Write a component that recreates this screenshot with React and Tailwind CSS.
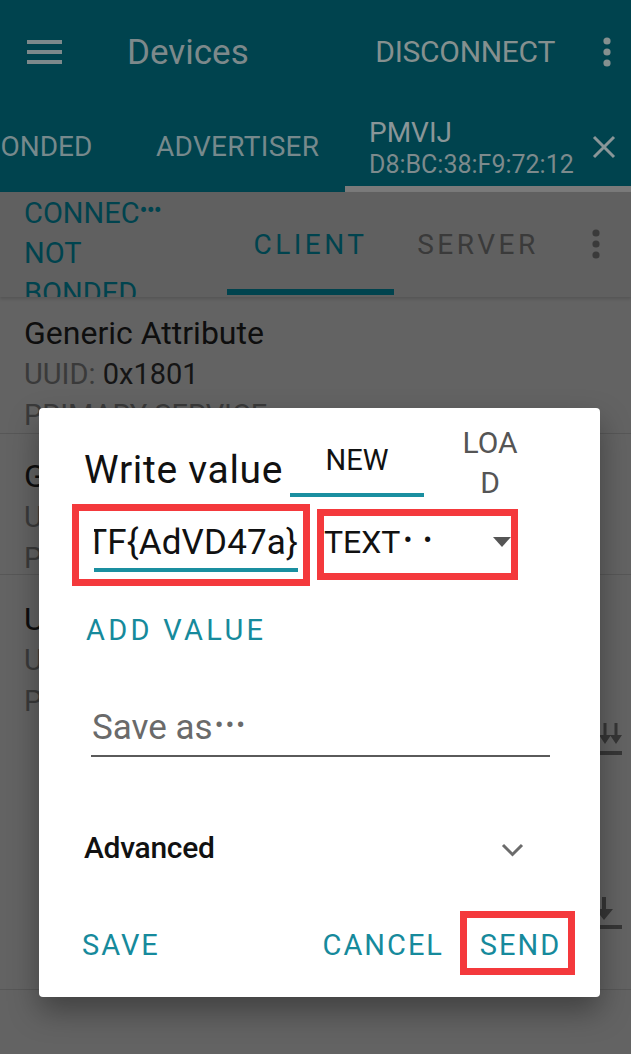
import React from "react";

function Kebab({ className, color }) {
  return (
    <svg className={className} width="8" height="30" viewBox="0 0 8 30">
      <circle cx="4" cy="4" r="3.6" fill={color} />
      <circle cx="4" cy="15" r="3.6" fill={color} />
      <circle cx="4" cy="26" r="3.6" fill={color} />
    </svg>
  );
}

export default function App() {
  return (
    <div className="relative w-[631px] h-[1054px] overflow-hidden bg-[#636363] font-[Roboto,sans-serif]">
      {/* Top app bar */}
      <div className="h-[192px] bg-[#00434e] flex flex-col">
        <div className="h-[104px] flex items-center">
          <svg className="ml-[27px] shrink-0" width="35" height="24" viewBox="0 0 35 24">
            <rect x="0" y="0" width="35" height="4" fill="#7d898b" />
            <rect x="0" y="10" width="35" height="4" fill="#7d898b" />
            <rect x="0" y="20" width="35" height="4" fill="#7d898b" />
          </svg>
          <span className="ml-[65px] text-[35px] leading-none text-[#7d898b]">Devices</span>
          <span className="ml-auto text-[30px] leading-none tracking-[-0.3px] text-[#85908f]">DISCONNECT</span>
          <Kebab className="ml-[48px] mr-[20px] shrink-0" color="#85908f" />
        </div>
        <div className="h-[82px] flex items-start overflow-hidden">
          <div className="w-[173px] ml-[-17px] shrink-0 mt-[29px] text-[28px] leading-none text-[#76898c]">BONDED</div>
          <div className="w-[190px] shrink-0 mt-[29px] text-[28px] leading-none tracking-[0.3px] text-[#76898c]">ADVERTISER</div>
          <div className="flex-1 flex items-start pl-[23px] pr-[15px]">
            <div className="flex flex-col mt-[15px]">
              <span className="text-[28px] leading-none text-[#8a9698]">PMVIJ</span>
              <span className="mt-[5px] text-[25px] leading-none text-[#7d8a8c]">D8:BC:38:F9:72:12</span>
            </div>
            <svg className="ml-auto mt-[31px]" width="24" height="24" viewBox="0 0 24 24">
              <path d="M2 2 L22 22 M22 2 L2 22" stroke="#8a9698" strokeWidth="3" />
            </svg>
          </div>
        </div>
        <div className="h-[6px] flex">
          <div className="ml-[345px] flex-1 bg-[#7a7a7a]" />
        </div>
      </div>

      {/* Secondary bar */}
      <div className="h-[105px] bg-[#606060] flex items-start shadow-[0_2px_3px_rgba(0,0,0,0.15)] relative">
        <div className="w-[227px] h-[105px] shrink-0 pl-[24px] pt-[1px] overflow-hidden text-[29px] leading-[40px] text-[#00434e]">
          <div className="whitespace-nowrap">
            CONNEC<span className="text-[24px] leading-none tracking-[-1px] align-[5px]">•••</span>
          </div>
          <div>NOT</div>
          <div>BONDED</div>
        </div>
        <div className="w-[167px] h-[103px] shrink-0 flex flex-col items-center border-b-[6px] border-[#00434e]">
          <span className="mt-[39px] text-[28px] leading-none tracking-[3.5px] text-[#00434e]">CLIENT</span>
        </div>
        <div className="w-[168px] shrink-0 flex justify-center">
          <span className="mt-[39px] text-[28px] leading-none tracking-[3.5px] text-[#3a3a3a]">SERVER</span>
        </div>
        <Kebab className="ml-[30px] mt-[37px] shrink-0" color="#3a3a3a" />
      </div>

      {/* List */}
      <div className="h-[137px] border-b border-[#575757] pl-[24px] pt-[16px]">
        <div className="text-[32px] leading-[41px] text-[#0e0e0e]">Generic Attribute</div>
        <div className="text-[29px] leading-[41px] text-[#3a3a3a]">
          UUID: <span className="text-[#151515]">0x1801</span>
        </div>
        <div className="text-[29px] leading-[41px] text-[#3a3a3a]">PRIMARY SERVICE</div>
      </div>
      <div className="h-[141px] border-b border-[#575757] pl-[24px] pt-[22px]">
        <div className="text-[32px] leading-[41px] text-[#0e0e0e]">Generic Access</div>
        <div className="text-[29px] leading-[41px] text-[#3a3a3a]">
          UUID: <span className="text-[#151515]">0x1800</span>
        </div>
        <div className="text-[29px] leading-[41px] text-[#3a3a3a]">PRIMARY SERVICE</div>
      </div>
      <div className="h-[415px] border-b border-[#575757] pl-[24px] pt-[24px] flex items-start">
        <div className="flex flex-col">
          <div className="text-[32px] leading-[41px] text-[#0e0e0e]">Unknown Service</div>
          <div className="text-[29px] leading-[41px] text-[#3a3a3a]">
            UUID: <span className="text-[#151515]">6e400001</span>
          </div>
          <div className="text-[29px] leading-[41px] text-[#3a3a3a]">PRIMARY SERVICE</div>
        </div>
        <div className="ml-auto mr-[7px] mt-[124px] flex flex-col">
          <svg width="36" height="32" viewBox="0 0 36 32">
            <path d="M17 0 V14 M28 0 V14" stroke="#363636" strokeWidth="3" />
            <path d="M11 12 L23 12 L17 21 Z M22 12 L34 12 L28 21 Z" fill="#363636" />
            <rect x="0" y="28" width="34" height="4" fill="#363636" />
          </svg>
          <svg className="mt-[142px]" width="36" height="32" viewBox="0 0 36 32">
            <path d="M16 0 V14" stroke="#363636" strokeWidth="4" />
            <path d="M7 12 L25 12 L16 23 Z" fill="#363636" />
            <rect x="0" y="28" width="34" height="4" fill="#363636" />
          </svg>
        </div>
      </div>

      {/* Dialog */}
      <div className="absolute left-[39px] top-[408px] w-[561px] h-[589px] bg-white rounded-[4px] shadow-[0_14px_30px_rgba(0,0,0,0.35)] flex flex-col">
        {/* Header */}
        <div className="h-[92px] flex items-start shrink-0">
          <div className="ml-[45px] w-[206px] shrink-0 mt-[43px] text-[39px] leading-none tracking-[0.7px] text-[#111] whitespace-nowrap">Write value</div>
          <div className="w-[134px] h-[89px] shrink-0 flex flex-col items-center border-b-[4px] border-[#1a8fa0]">
            <span className="mt-[38px] text-[29px] leading-none text-[#111]">NEW</span>
          </div>
          <div className="ml-[16px] w-[100px] shrink-0 pt-[15px] flex justify-center">
            <span className="w-[62px] break-all text-center text-[30px] leading-[40px] text-[#555]">LOAD</span>
          </div>
        </div>

        {/* Value row */}
        <div className="mt-[4px] flex items-start shrink-0">
          <div className="ml-[33px] w-[238px] h-[82px] shrink-0 border-[7px] border-[#f4393c] pl-[15px] pr-[5px]">
            <div className="h-[61px] pt-[14px] border-b-[4px] border-[#1a8fa0] overflow-hidden flex justify-end">
              <span className="whitespace-nowrap text-[35px] leading-none tracking-[0.15px] text-[#111]">TF{"{"}AdVD47a{"}"}</span>
            </div>
          </div>
          <div className="ml-[7px] mt-[5px] w-[201px] h-[71px] shrink-0 border-[7px] border-[#f4393c] flex items-start">
            <span className="mt-[10px] text-[32px] leading-none text-[#111] whitespace-nowrap">
              TEXT<span className="ml-[3px] text-[26px] leading-none tracking-[11px] align-[4px]">••</span>
            </span>
            <svg className="ml-auto mt-[21px]" width="18" height="10" viewBox="0 0 18 10">
              <path d="M0 0 L18 0 L9 10 Z" fill="#555" />
            </svg>
          </div>
        </div>

        {/* Add value */}
        <div className="mt-[30px] ml-[47px] text-[29px] leading-none tracking-[3.3px] text-[#168a9c] shrink-0">ADD VALUE</div>

        {/* Save as */}
        <div className="mt-[65px] ml-[52px] w-[459px] pb-[10px] border-b-[2px] border-[#5a5a5a] shrink-0">
          <div className="pl-[1px] text-[35px] leading-none text-[#6a6a6a] whitespace-nowrap">
            Save as<span className="ml-[2px] text-[26px] leading-none tracking-[2px] align-[5px]">•••</span>
          </div>
        </div>

        {/* Advanced */}
        <div className="mt-[76px] ml-[45px] mr-[76px] flex items-start shrink-0">
          <span className="text-[30px] leading-none font-medium tracking-[-0.3px] text-[#111]">Advanced</span>
          <svg className="ml-auto mt-[10px]" width="23" height="14" viewBox="0 0 23 14">
            <path d="M2 2 L11.5 11.5 L21 2" fill="none" stroke="#6b6b6b" strokeWidth="3" />
          </svg>
        </div>

        {/* Buttons */}
        <div className="mt-[48px] h-[64px] flex items-center shrink-0">
          <span className="ml-[43px] pt-[5px] text-[29px] leading-none tracking-[2px] text-[#168a9c]">SAVE</span>
          <span className="ml-auto mr-[16px] pt-[5px] text-[29px] leading-none tracking-[2px] text-[#168a9c]">CANCEL</span>
          <div className="mr-[25px] w-[115px] h-[64px] border-[7px] border-[#f4393c] flex items-center justify-center">
            <span className="pl-[6px] pt-[5px] text-[29px] leading-none tracking-[2px] text-[#168a9c]">SEND</span>
          </div>
        </div>
      </div>
    </div>
  );
}
